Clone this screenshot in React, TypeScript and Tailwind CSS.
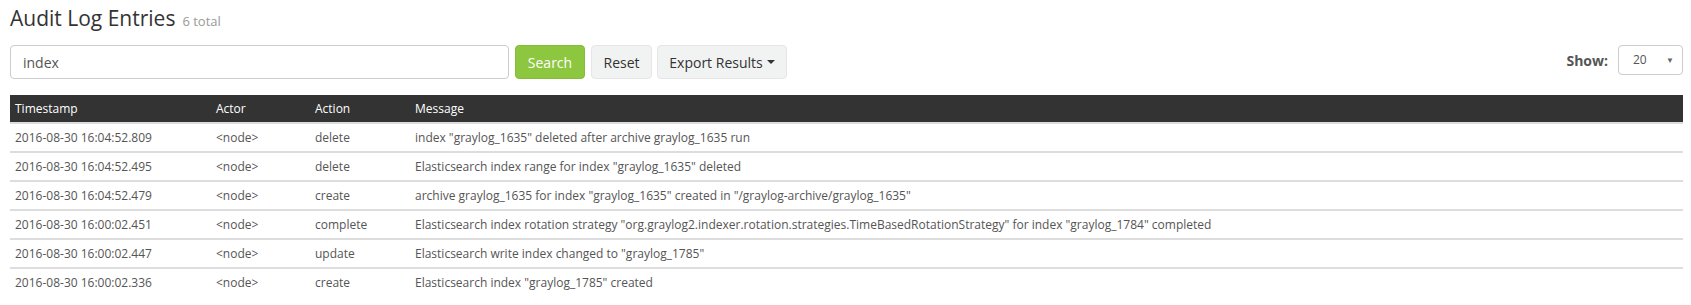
import React from "react";

const rows = [
  ["2016-08-30 16:04:52.809", "<node>", "delete", 'index "graylog_1635" deleted after archive graylog_1635 run'],
  ["2016-08-30 16:04:52.495", "<node>", "delete", 'Elasticsearch index range for index "graylog_1635" deleted'],
  ["2016-08-30 16:04:52.479", "<node>", "create", 'archive graylog_1635 for index "graylog_1635" created in "/graylog-archive/graylog_1635"'],
  ["2016-08-30 16:00:02.451", "<node>", "complete", 'Elasticsearch index rotation strategy "org.graylog2.indexer.rotation.strategies.TimeBasedRotationStrategy" for index "graylog_1784" completed'],
  ["2016-08-30 16:00:02.447", "<node>", "update", 'Elasticsearch write index changed to "graylog_1785"'],
  ["2016-08-30 16:00:02.336", "<node>", "create", 'Elasticsearch index "graylog_1785" created'],
];

export default function App() {
  return (
    <div className="w-[1691px] h-[305px] bg-white pl-[10px] pr-[8px] font-['Open_Sans',sans-serif] overflow-hidden">
      <h1 className="pt-[5px] h-[30px] text-[21px] leading-[26px] text-[#333] font-normal flex items-baseline">
        <span>Audit Log Entries</span>
        <small className="ml-[7px] text-[13px] leading-none text-[#999]">6 total</small>
      </h1>
      <div className="mt-[15px] flex items-start">
        <div className="w-[499px] h-[34px] border border-[#ccc] rounded-[4px] flex items-center pl-[12px] text-[14px] text-[#555]">
          index
        </div>
        <button className="ml-[6px] w-[70px] h-[34px] rounded-[4px] bg-[#8dc63f] border border-[#86bb3b] text-white text-[14px]">
          Search
        </button>
        <button className="ml-[6px] w-[61px] h-[34px] rounded-[4px] bg-[#f1f2f2] border border-[#e6e6e6] text-[#333] text-[14px]">
          Reset
        </button>
        <button className="ml-[5px] w-[130px] h-[34px] rounded-[4px] bg-[#f1f2f2] border border-[#e6e6e6] text-[#333] text-[14px] flex items-center justify-center">
          Export Results
          <span className="ml-[4px] w-0 h-0 border-t-[4px] border-t-[#333] border-x-[4px] border-x-transparent" />
        </button>
        <div className="ml-auto flex items-center h-[30px]">
          <span className="text-[14px] font-bold text-[#555]">Show:</span>
          <div className="ml-[10px] w-[65px] h-[30px] border border-[#ccc] rounded-[4px] flex items-center pl-[14px] pr-[8px] text-[12px] text-[#555]">
            <span>20</span>
            <span className="ml-auto text-[8px] text-[#666]">▼</span>
          </div>
        </div>
      </div>
      <div className="mt-[16px] text-[12px]">
        <div className="flex h-[27px] items-center bg-[#333] text-white">
          <div className="w-[201px] pl-[5px]">Timestamp</div>
          <div className="w-[99px] pl-[5px]">Actor</div>
          <div className="w-[100px] pl-[5px]">Action</div>
          <div className="flex-1 pl-[5px]">Message</div>
        </div>
        <div className="text-[#555]">
          {rows.map((r, i) => (
            <div key={i} className="flex h-[29px] items-center border-t-2 border-[#ddd] whitespace-nowrap">
              <div className="w-[201px] pl-[5px]">{r[0]}</div>
              <div className="w-[99px] pl-[5px]">{r[1]}</div>
              <div className="w-[100px] pl-[5px]">{r[2]}</div>
              <div className="flex-1 pl-[5px]">{r[3]}</div>
            </div>
          ))}
        </div>
      </div>
    </div>
  );
}
